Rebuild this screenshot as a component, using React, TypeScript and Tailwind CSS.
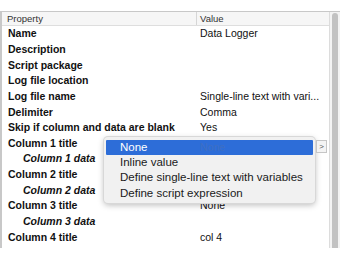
import React from 'react'

type Row = { label: string; value?: string; child?: boolean }

const rows: Row[] = [
  { label: 'Name', value: 'Data Logger' },
  { label: 'Description' },
  { label: 'Script package' },
  { label: 'Log file location' },
  { label: 'Log file name', value: 'Single-line text with vari...' },
  { label: 'Delimiter', value: 'Comma' },
  { label: 'Skip if column and data are blank', value: 'Yes' },
  { label: 'Column 1 title' },
  { label: 'Column 1 data', child: true },
  { label: 'Column 2 title' },
  { label: 'Column 2 data', child: true },
  { label: 'Column 3 title', value: 'None' },
  { label: 'Column 3 data', child: true },
  { label: 'Column 4 title', value: 'col 4' },
]

const options = ['None', 'Inline value', 'Define single-line text with variables', 'Define script expression']

export default function App() {
  return (
    <div className="h-[260px] w-[340px] bg-white pt-[11px] font-['Liberation_Sans',Arial,sans-serif] text-[#111]">
      <div className="relative flex h-[237px] border-t border-l-2 border-[#c8c8c8]">
        <div className="flex flex-1 flex-col">
          <div className="grid h-[14px] grid-cols-[194px_1fr] border-b border-[#dedede] bg-[#f6f6f6] text-[9.5px] leading-[13px] text-[#333]">
            <div className="pl-[5px]">Property</div>
            <div className="border-l border-[#d6d6d6] pl-[3px]">Value</div>
          </div>
          {rows.map((r) => (
            <div key={r.label} className="grid h-[15.65px] grid-cols-[194px_1fr] items-center text-[10.5px] leading-[15px]">
              <div className={r.child ? 'pl-[21px] font-bold italic' : 'pl-[6px] font-bold'}>{r.label}</div>
              <div className="whitespace-nowrap pl-[4px]">{r.value}</div>
            </div>
          ))}
        </div>
        <div className="w-[11px] border-l border-[#dcdcdc] bg-[#f3f3f3] pt-[1px] pl-[2px]">
          <div className="h-full w-[6px] rounded-t-full bg-[#c2c2c2]" />
        </div>

        <div className="absolute left-[102px] top-[125px] w-[211px] rounded-[4px] bg-[#f1f1f1] px-[2px] pt-[3px] pb-[2px] text-[11.5px] leading-[15px] shadow-[0_2px_6px_rgba(0,0,0,0.28)] ring-1 ring-[#d8d8d8]">
          {options.map((o, i) => (
            <div
              key={o}
              className={
                i === 0
                  ? 'relative h-[15.2px] rounded-[1px] bg-[#2d6dd8] pl-[14px] text-white'
                  : 'h-[15.2px] pl-[14px] text-[#1a1a1a]'
              }
            >
              {o}
              {i === 0 && (
                <span className="absolute left-[94px] top-0 text-[10.5px] text-[#3d6fc4]">None</span>
              )}
            </div>
          ))}
        </div>
        <div className="absolute left-[314px] top-[128px] flex h-[13px] w-[11px] items-center justify-center border border-[#c6c6c6] bg-[#f4f4f4] text-[8px] leading-none text-[#555]">
          &gt;
        </div>
      </div>
    </div>
  )
}
